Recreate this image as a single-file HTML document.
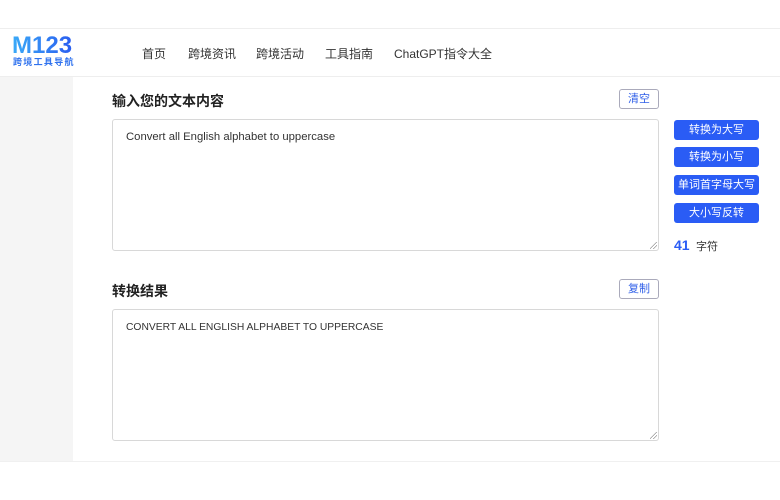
<!DOCTYPE html>
<html><head><meta charset="utf-8"><style>
*{margin:0;padding:0;box-sizing:border-box}
body{width:780px;height:500px;background:#fff;font-family:"Liberation Sans","Noto Sans CJK SC",sans-serif;position:relative;overflow:hidden;color:#333}
.top{position:absolute;left:0;top:28px;width:780px;height:1px;background:#eee}
.hdr{position:absolute;left:0;top:29px;width:780px;height:48px;background:#fff;border-bottom:1px solid #eee}
.logo{position:absolute;left:12px;top:34px;font-weight:bold;font-size:24px;line-height:24px;background:linear-gradient(90deg,#3aaaf8,#2a5ef0);-webkit-background-clip:text;color:transparent}
.logosub{position:absolute;left:13px;top:57px;font-size:9px;line-height:10px;color:#2f72ee;letter-spacing:1.3px;font-weight:bold}
.nav{position:absolute;top:45px;font-size:12px;color:#333}
.side{position:absolute;left:0;top:77px;width:73px;height:385px;background:#f5f5f5}
.bot{position:absolute;left:0;top:461px;width:780px;height:1px;background:#f0f0f0}
h2{position:absolute;left:112px;font-size:14px;font-weight:bold;color:#222}
.ta{position:absolute;left:112px;width:547px;border:1px solid #d8d8d8;border-radius:3px;padding:11px 13px;color:#333;background:#fff}
.ta:after{content:"";position:absolute;right:1px;bottom:1px;width:7px;height:7px;background:linear-gradient(135deg,transparent 45%,#999 46%,#999 52%,transparent 53%,transparent 70%,#999 71%,#999 77%,transparent 78%)}
.ob{position:absolute;left:619px;width:40px;height:20px;border:1px solid #aab;border-radius:3px;font-size:11px;color:#2f5fe8;text-align:center;line-height:18px}
.bb{position:absolute;left:674px;width:85px;height:20px;background:#2a5cf5;border-radius:3px;color:#fff;font-size:11px;text-align:center;line-height:20px}
</style></head><body>
<div class="top"></div>
<div class="hdr"></div>
<div class="logo">M123</div>
<div class="logosub">跨境工具导航</div>
<div class="nav" style="left:142px">首页</div>
<div class="nav" style="left:188px">跨境资讯</div>
<div class="nav" style="left:256px">跨境活动</div>
<div class="nav" style="left:325px">工具指南</div>
<div class="nav" style="left:394px">ChatGPT指令大全</div>
<div class="side"></div>
<div class="bot"></div>
<h2 style="top:91px">输入您的文本内容</h2>
<div class="ob" style="top:89px">清空</div>
<div class="ta" style="top:119px;height:132px;font-size:11.3px">Convert all English alphabet to uppercase</div>
<div class="bb" style="top:120px">转换为大写</div>
<div class="bb" style="top:147px">转换为小写</div>
<div class="bb" style="top:175px">单词首字母大写</div>
<div class="bb" style="top:203px">大小写反转</div>
<div style="position:absolute;left:674px;top:237px;font-size:14px;font-weight:bold;color:#2a5cf5">41</div>
<div style="position:absolute;left:696px;top:238px;font-size:11px;color:#333">字符</div>
<h2 style="top:281px">转换结果</h2>
<div class="ob" style="top:279px">复制</div>
<div class="ta" style="top:309px;height:132px;font-size:10.3px;padding-top:12px">CONVERT ALL ENGLISH ALPHABET TO UPPERCASE</div>
</body></html>
